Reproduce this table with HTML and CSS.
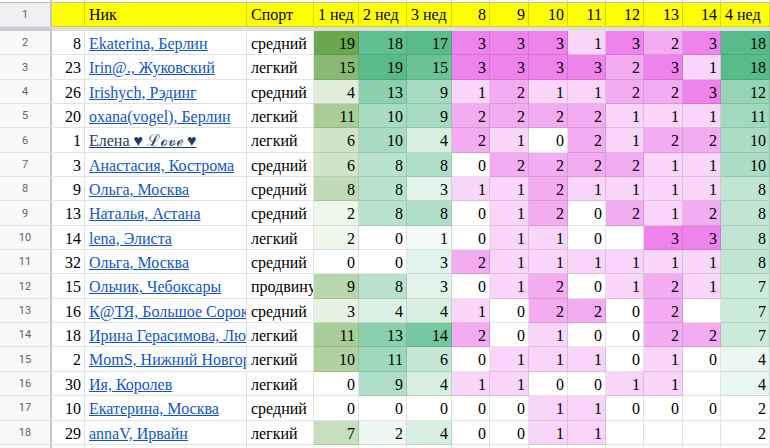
FILE: index.html
```html
<!DOCTYPE html>
<html lang="ru">
<head>
<meta charset="utf-8">
<title>Таблица</title>
<link rel="stylesheet" href="styles.css">
</head>
<body>
<div class="sheet">
  <div class="ch rhc"></div><div class="ch"></div><div class="ch"></div><div class="ch"></div><div class="ch"></div><div class="ch"></div><div class="ch"></div><div class="ch"></div><div class="ch"></div><div class="ch"></div><div class="ch"></div><div class="ch"></div><div class="ch"></div><div class="ch"></div><div class="ch"></div>

  <div class="rh rh1">1</div><div class="c y"></div><div class="c y">Ник</div><div class="c y">Спорт</div><div class="c y">1 нед</div><div class="c y">2 нед</div><div class="c y">3 нед</div><div class="c y n">8</div><div class="c y n">9</div><div class="c y n">10</div><div class="c y n">11</div><div class="c y n">12</div><div class="c y n">13</div><div class="c y n">14</div><div class="c y">4 нед</div>

  <div class="fz-rh"></div><div class="fz"></div>

  <div class="rh">2</div><div class="c n">8</div><div class="c"><a href="#">Ekaterina, Берлин</a></div><div class="c">средний</div><div class="c n" style="background:rgb(106,168,79)">19</div><div class="c n" style="background:rgb(96,191,144)">18</div><div class="c n" style="background:rgb(87,187,138)">17</div><div class="c n p3">3</div><div class="c n p3">3</div><div class="c n p3">3</div><div class="c n p1">1</div><div class="c n p3">3</div><div class="c n p2">2</div><div class="c n p3">3</div><div class="c n" style="background:rgb(87,187,138)">18</div>

  <div class="rh">3</div><div class="c n">23</div><div class="c"><a href="#">Irin@., Жуковский</a></div><div class="c">легкий</div><div class="c n" style="background:rgb(137,186,116)">15</div><div class="c n" style="background:rgb(87,187,138)">19</div><div class="c n" style="background:rgb(107,195,152)">15</div><div class="c n p3">3</div><div class="c n p3">3</div><div class="c n p3">3</div><div class="c n p3">3</div><div class="c n p2">2</div><div class="c n p3">3</div><div class="c n p1">1</div><div class="c n" style="background:rgb(87,187,138)">18</div>

  <div class="rh">4</div><div class="c n">26</div><div class="c"><a href="#">Irishych, Рэдинг</a></div><div class="c">средний</div><div class="c n" style="background:rgb(224,237,218)">4</div><div class="c n" style="background:rgb(140,209,175)">13</div><div class="c n" style="background:rgb(166,219,193)">9</div><div class="c n p1">1</div><div class="c n p2">2</div><div class="c n p1">1</div><div class="c n p1">1</div><div class="c n p2">2</div><div class="c n p2">2</div><div class="c n p3">3</div><div class="c n" style="background:rgb(150,212,182)">12</div>

  <div class="rh">5</div><div class="c n">20</div><div class="c"><a href="#">oxana(vogel), Берлин</a></div><div class="c">легкий</div><div class="c n" style="background:rgb(169,205,153)">11</div><div class="c n" style="background:rgb(167,219,194)">10</div><div class="c n" style="background:rgb(166,219,193)">9</div><div class="c n p2">2</div><div class="c n p2">2</div><div class="c n p2">2</div><div class="c n p2">2</div><div class="c n p1">1</div><div class="c n p1">1</div><div class="c n p1">1</div><div class="c n" style="background:rgb(160,217,189)">11</div>

  <div class="rh">6</div><div class="c n">1</div><div class="c"><a href="#" class="dk">Елена ♥ ℒℴ𝓋ℯ ♥</a></div><div class="c">легкий</div><div class="c n" style="background:rgb(208,228,199)">6</div><div class="c n" style="background:rgb(167,219,194)">10</div><div class="c n" style="background:rgb(215,239,227)">4</div><div class="c n p2">2</div><div class="c n p1">1</div><div class="c n">0</div><div class="c n p2">2</div><div class="c n p1">1</div><div class="c n p2">2</div><div class="c n p2">2</div><div class="c n" style="background:rgb(171,221,196)">10</div>

  <div class="rh">7</div><div class="c n">3</div><div class="c"><a href="#">Анастасия, Кострома</a></div><div class="c">средний</div><div class="c n" style="background:rgb(208,228,199)">6</div><div class="c n" style="background:rgb(184,226,206)">8</div><div class="c n" style="background:rgb(176,223,200)">8</div><div class="c n">0</div><div class="c n p2">2</div><div class="c n p2">2</div><div class="c n p2">2</div><div class="c n p2">2</div><div class="c n p1">1</div><div class="c n p1">1</div><div class="c n" style="background:rgb(171,221,196)">10</div>

  <div class="rh">8</div><div class="c n">9</div><div class="c"><a href="#">Ольга, Москва</a></div><div class="c">средний</div><div class="c n" style="background:rgb(192,218,181)">8</div><div class="c n" style="background:rgb(184,226,206)">8</div><div class="c n" style="background:rgb(225,243,234)">3</div><div class="c n p1">1</div><div class="c n p1">1</div><div class="c n p2">2</div><div class="c n p1">1</div><div class="c n p1">1</div><div class="c n p1">1</div><div class="c n p1">1</div><div class="c n" style="background:rgb(192,229,211)">8</div>

  <div class="rh">9</div><div class="c n">13</div><div class="c"><a href="#">Наталья, Астана</a></div><div class="c">средний</div><div class="c n" style="background:rgb(239,246,236)">2</div><div class="c n" style="background:rgb(184,226,206)">8</div><div class="c n" style="background:rgb(176,223,200)">8</div><div class="c n">0</div><div class="c n p1">1</div><div class="c n p2">2</div><div class="c n">0</div><div class="c n p2">2</div><div class="c n p1">1</div><div class="c n p2">2</div><div class="c n" style="background:rgb(192,229,211)">8</div>

  <div class="rh">10</div><div class="c n">14</div><div class="c"><a href="#">lena, Элиста</a></div><div class="c">легкий</div><div class="c n" style="background:rgb(239,246,236)">2</div><div class="c n">0</div><div class="c n" style="background:rgb(245,251,248)">1</div><div class="c n">0</div><div class="c n p1">1</div><div class="c n p1">1</div><div class="c n">0</div><div class="c n"></div><div class="c n p3">3</div><div class="c n p3">3</div><div class="c n" style="background:rgb(192,229,211)">8</div>

  <div class="rh">11</div><div class="c n">32</div><div class="c"><a href="#">Ольга, Москва</a></div><div class="c">средний</div><div class="c n">0</div><div class="c n">0</div><div class="c n" style="background:rgb(225,243,234)">3</div><div class="c n p2">2</div><div class="c n p1">1</div><div class="c n p1">1</div><div class="c n p1">1</div><div class="c n p1">1</div><div class="c n p1">1</div><div class="c n p1">1</div><div class="c n" style="background:rgb(192,229,211)">8</div>

  <div class="rh">12</div><div class="c n">15</div><div class="c"><a href="#">Ольчик, Чебоксары</a></div><div class="c">продвинутый</div><div class="c n" style="background:rgb(184,214,172)">9</div><div class="c n" style="background:rgb(184,226,206)">8</div><div class="c n" style="background:rgb(225,243,234)">3</div><div class="c n">0</div><div class="c n p1">1</div><div class="c n p2">2</div><div class="c n">0</div><div class="c n p1">1</div><div class="c n p2">2</div><div class="c n p1">1</div><div class="c n" style="background:rgb(202,234,218)">7</div>

  <div class="rh">13</div><div class="c n">16</div><div class="c"><a href="#">К@ТЯ, Большое Сорокино</a></div><div class="c">средний</div><div class="c n" style="background:rgb(231,241,227)">3</div><div class="c n" style="background:rgb(220,241,230)">4</div><div class="c n" style="background:rgb(215,239,227)">4</div><div class="c n p1">1</div><div class="c n">0</div><div class="c n p2">2</div><div class="c n p2">2</div><div class="c n">0</div><div class="c n p2">2</div><div class="c n"></div><div class="c n" style="background:rgb(202,234,218)">7</div>

  <div class="rh">14</div><div class="c n">18</div><div class="c"><a href="#">Ирина Герасимова, Люберцы</a></div><div class="c">легкий</div><div class="c n" style="background:rgb(169,205,153)">11</div><div class="c n" style="background:rgb(140,209,175)">13</div><div class="c n" style="background:rgb(117,199,159)">14</div><div class="c n p2">2</div><div class="c n">0</div><div class="c n p1">1</div><div class="c n">0</div><div class="c n">0</div><div class="c n p2">2</div><div class="c n p2">2</div><div class="c n" style="background:rgb(202,234,218)">7</div>

  <div class="rh">15</div><div class="c n">2</div><div class="c"><a href="#">MomS, Нижний Новгород</a></div><div class="c">легкий</div><div class="c n" style="background:rgb(177,209,162)">10</div><div class="c n" style="background:rgb(158,216,187)">11</div><div class="c n" style="background:rgb(196,231,214)">6</div><div class="c n">0</div><div class="c n p1">1</div><div class="c n p1">1</div><div class="c n p1">1</div><div class="c n">0</div><div class="c n p1">1</div><div class="c n">0</div><div class="c n" style="background:rgb(234,246,240)">4</div>

  <div class="rh">16</div><div class="c n">30</div><div class="c"><a href="#">Ия, Королев</a></div><div class="c">легкий</div><div class="c n">0</div><div class="c n" style="background:rgb(175,223,200)">9</div><div class="c n" style="background:rgb(215,239,227)">4</div><div class="c n p1">1</div><div class="c n p1">1</div><div class="c n">0</div><div class="c n">0</div><div class="c n p1">1</div><div class="c n p1">1</div><div class="c n"></div><div class="c n" style="background:rgb(234,246,240)">4</div>

  <div class="rh">17</div><div class="c n">10</div><div class="c"><a href="#">Екатерина, Москва</a></div><div class="c">средний</div><div class="c n">0</div><div class="c n">0</div><div class="c n">0</div><div class="c n">0</div><div class="c n">0</div><div class="c n p1">1</div><div class="c n p1">1</div><div class="c n">0</div><div class="c n">0</div><div class="c n">0</div><div class="c n">2</div>

  <div class="rh">18</div><div class="c n">29</div><div class="c"><a href="#">annaV, Ирвайн</a></div><div class="c">легкий</div><div class="c n" style="background:rgb(200,223,190)">7</div><div class="c n" style="background:rgb(237,248,243)">2</div><div class="c n" style="background:rgb(215,239,227)">4</div><div class="c n">0</div><div class="c n">0</div><div class="c n p1">1</div><div class="c n p1">1</div><div class="c n"></div><div class="c n"></div><div class="c n"></div><div class="c n">2</div>

  <div class="rh">19</div><div class="c"></div><div class="c"></div><div class="c"></div><div class="c"></div><div class="c"></div><div class="c"></div><div class="c"></div><div class="c"></div><div class="c"></div><div class="c"></div><div class="c"></div><div class="c"></div><div class="c"></div><div class="c"></div>
</div>
</body>
</html>
```

FILE: styles.css
```css
html, body {
  margin: 0;
  padding: 0;
  background: #ffffff;
  overflow: hidden;
}

body {
  font-family: "Liberation Serif", "Times New Roman", serif;
  font-size: 16px;
  color: #000000;
}

.sheet {
  display: grid;
  grid-template-columns: 52px 33px 162px 67px 45px 48px 45px 38px 39px 39px 38px 38px 39px 38px 49px;
  grid-template-rows: 3px 24px 4px repeat(18, 24.35px);
  width: 770px;
}

.ch {
  background: #f8f9fa;
  border-right: 1px solid #dadce0;
  border-bottom: 1px solid #b8bcc0;
  box-sizing: border-box;
}

.ch.rhc {
  border-right: 2px solid #c4c7c5;
}

.rh {
  box-sizing: border-box;
  background: #f8f9fa;
  border-right: 2px solid #c4c7c5;
  border-bottom: 1px solid #e1e3e6;
  display: flex;
  align-items: center;
  justify-content: center;
  font-family: Roboto, "Liberation Sans", sans-serif;
  font-size: 11px;
  color: #5f6368;
}

.rh1 {
  background: #eef0f2;
}

.fz-rh {
  background: #c9ccd0;
}

.fz {
  grid-column: 2 / -1;
  background: #dcdfe4;
}

.c {
  box-sizing: border-box;
  border-right: 1px solid rgba(0, 0, 0, 0.11);
  border-bottom: 1px solid rgba(0, 0, 0, 0.11);
  padding: 2px 3px 0 4px;
  line-height: 22px;
  white-space: nowrap;
  overflow: hidden;
}

.y {
  background: #ffff00;
  border-right-color: rgba(0, 0, 0, 0.16);
  border-bottom-color: rgba(0, 0, 0, 0.16);
  padding-top: 1px;
}

.n {
  text-align: right;
}

.p1 { background: #f9d5f9; }
.p2 { background: #f3acf2; }
.p3 { background: #ee83ec; }

.c a {
  color: #1155cc;
  text-decoration: underline;
}

.c a.dk {
  color: #1d3a6e;
}
```
